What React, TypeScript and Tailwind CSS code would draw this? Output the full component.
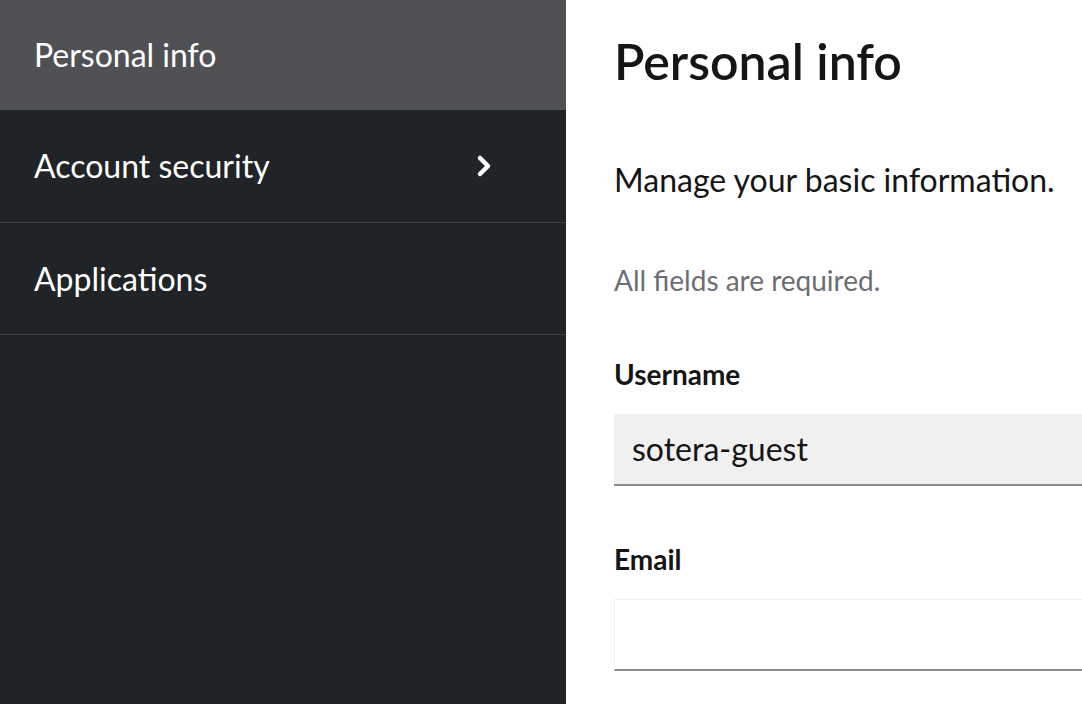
const font = { fontFamily: '"Lato", "Open Sans", sans-serif' };

const NavItem = ({ label, active, chevron, className }: { label: string; active?: boolean; chevron?: boolean; className: string }) => (
  <div
    className={`flex items-center pl-[34px] pr-[74px] text-[32px] text-white ${active ? "bg-[#4f5155]" : "border-b border-[#3c3f42]"} ${className}`}
  >
    <span>{label}</span>
    {chevron && (
      <svg className="ml-auto" width="16" height="24" viewBox="0 0 16 24">
        <polyline points="4,4 12,12 4,20" fill="none" stroke="white" strokeWidth="4.5" strokeLinecap="round" strokeLinejoin="round" />
      </svg>
    )}
  </div>
);

export default function App() {
  return (
    <div className="flex h-[704px] w-full overflow-hidden bg-white" style={font}>
      {/* Sidebar */}
      <div className="w-[566px] shrink-0 bg-[#212427]">
        <NavItem label="Personal info" active className="h-[110px]" />
        <NavItem label="Account security" chevron className="h-[113px]" />
        <NavItem label="Applications" className="h-[112px]" />
      </div>

      {/* Main */}
      <div className="flex-1 pl-[48px] pt-[30px] text-[#151515]">
        <h1 className="text-[50px] font-semibold leading-[62px]">Personal info</h1>
        <p className="mt-[68px] text-[32px] leading-[40px]">Manage your basic information.</p>
        <p className="mt-[62px] text-[28px] leading-[36px] text-[#6a6e73]">All fields are required.</p>

        <label className="mt-[58px] block text-[28px] font-bold leading-[36px]">Username</label>
        <div className="mt-[22px] flex h-[72px] w-[600px] items-center border-b-2 border-[#8a8d90] bg-[#f0f0f0] pl-[18px] text-[32px]">
          sotera-guest
        </div>

        <label className="mt-[55px] block text-[28px] font-bold leading-[36px]">Email</label>
        <div className="mt-[22px] h-[72px] w-[600px] border border-b-2 border-[#f0f0f0] border-b-[#8a8d90] bg-white" />
      </div>
    </div>
  );
}
